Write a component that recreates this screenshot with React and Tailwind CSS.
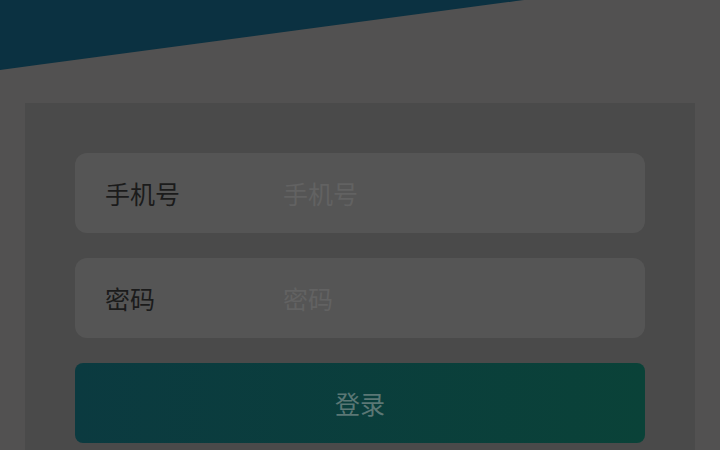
import React from "react";

export default function App() {
  const font = { fontFamily: '"Noto Sans CJK SC", "Noto Sans", sans-serif' };
  return (
    <div className="w-[720px] h-[450px] overflow-hidden bg-[#525151]" style={font}>
      <div className="h-[103px] w-full">
        <svg width="720" height="103" viewBox="0 0 720 103" className="block">
          <path d="M0 0 L524 0 Q300 30 0 70 Z" fill="#0b3141" />
        </svg>
      </div>
      <div className="mx-[25px] h-[400px] bg-[#4a4a4a] px-[50px] pt-[50px] flex flex-col gap-[25px]">
        <div className="h-[80px] rounded-[12px] bg-[#555555] flex items-center">
          <div className="w-[208px] pl-[30px] text-[25px] leading-none text-[#1b1b1b]">手机号</div>
          <div className="text-[25px] leading-none text-[#626262]">手机号</div>
        </div>
        <div className="h-[80px] rounded-[12px] bg-[#555555] flex items-center">
          <div className="w-[208px] pl-[30px] text-[25px] leading-none text-[#1b1b1b]">密码</div>
          <div className="text-[25px] leading-none text-[#626262]">密码</div>
        </div>
        <div className="h-[80px] rounded-[8px] bg-gradient-to-r from-[#0b3a40] to-[#0a4238] flex items-center justify-center">
          <span className="text-[25px] leading-none text-[#5b7775]">登录</span>
        </div>
      </div>
    </div>
  );
}
